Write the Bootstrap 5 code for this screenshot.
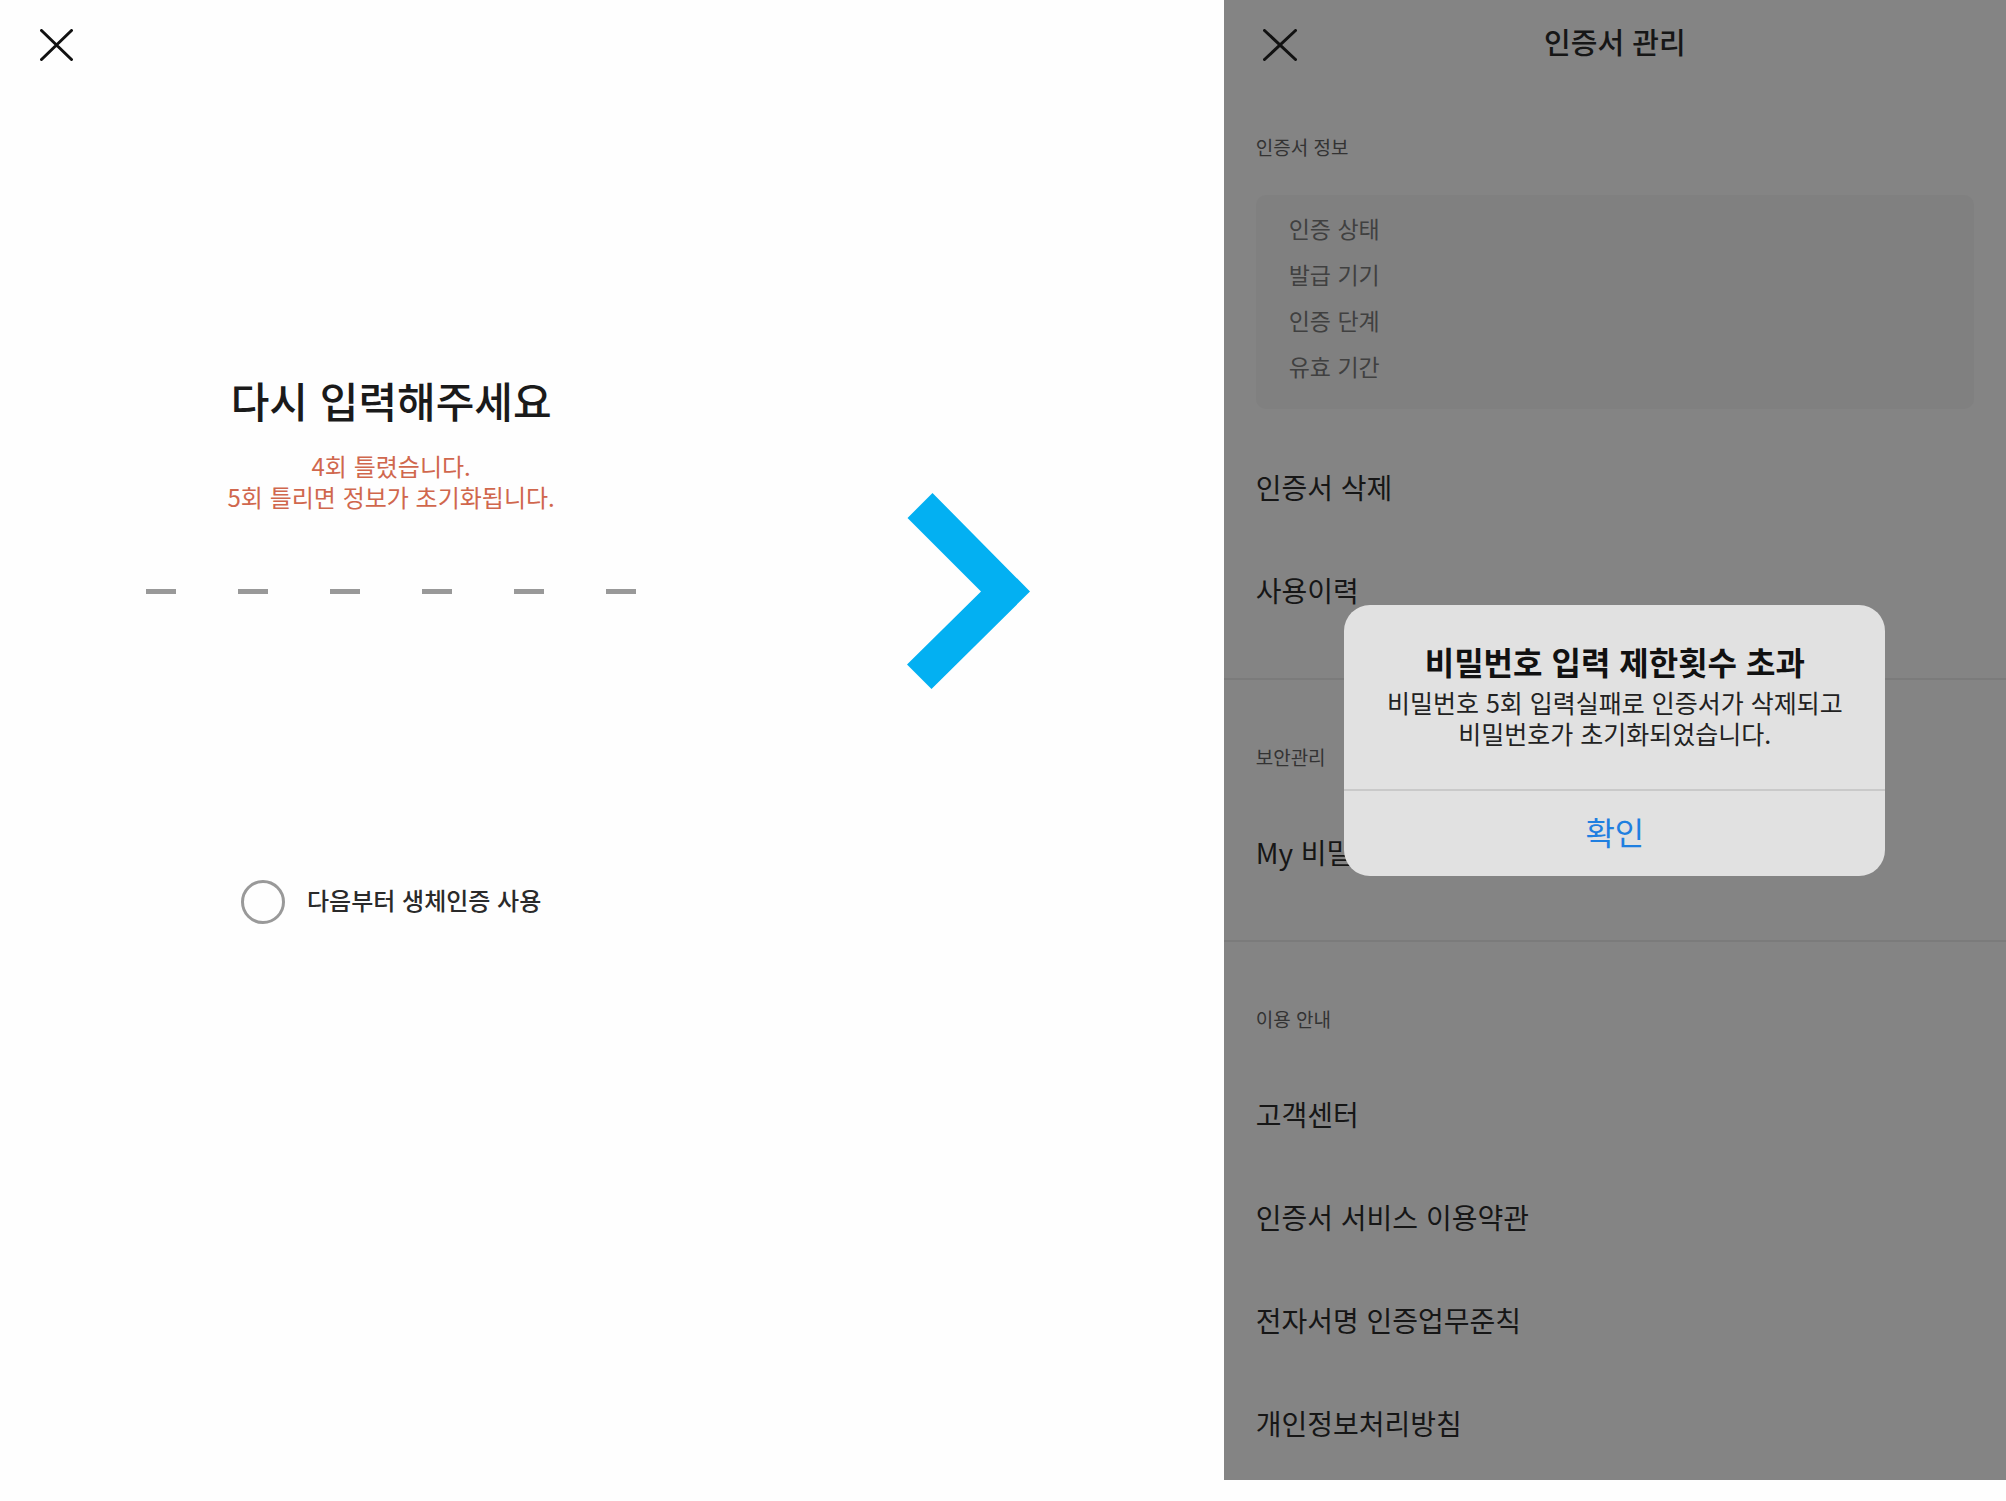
<!DOCTYPE html>
<html lang="ko">
<head>
<meta charset="utf-8">
<meta name="viewport" content="width=device-width, initial-scale=1">
<title>인증서 관리</title>
<link href="https://cdn.jsdelivr.net/npm/bootstrap@5.3.0/dist/css/bootstrap.min.css" rel="stylesheet">
<style>
  body { font-family: "Noto Sans CJK KR", sans-serif; color: #1a1a1a; background: #fefefe; }
  .phone { flex: 0 0 39%; min-width: 0; }
  .top-bar { height: 86px; }
  .close-btn { width: 34px; height: 32px; }
  .close-btn svg, .arrow svg { display: block; }

  .retry-title { font-size: 42px; line-height: 60px; font-weight: 500; margin: 284px 0 20px; }
  .retry-note { font-size: 24px; line-height: 31px; color: #d0674d; }
  .pins { gap: 62px; margin-top: 42px; }
  .pin { width: 30px; height: 40px; border: 0; border-bottom: 5px solid #999; background: none; outline: 0; text-align: center; }
  .bio { margin-top: 286px; gap: 22px; font-size: 24px; line-height: 40px; font-weight: 500; color: #2a2a2a; }
  .bio .form-check-input { width: 44px; height: 44px; margin: 0; border: 3px solid #999; background-color: transparent; }
  .bio label { padding-bottom: 4px; }

  .arrow { padding: 493px 0 0 6.2%; }

  .manage { background: #848484; }
  .manage .top-bar { padding-left: 39px; }
  .bar-title { font-size: 29px; line-height: 40px; padding-bottom: 4px; color: #161616; }
  .group { padding: 57px 32px 36px; border-bottom: 2px solid #7b7b7b; }
  .group:first-of-type { padding-top: 41px; }
  .group:last-of-type { border-bottom: 0; padding-bottom: 5px; }
  .group-name { font-size: 19px; line-height: 40px; color: #333; margin: 0 0 24px; }
  .info { background: #808080; border-radius: 10px; padding: 10px 33px 20px; margin: 28px 0 27px; font-size: 23px; line-height: 46px; color: #404040; }
  .info dt { font-weight: 400; }
  .entry { display: block; font-size: 28px; line-height: 103px; color: #161616; text-decoration: none; }

  .alert-box { width: 541px; max-width: 90%; background: #e1e1e1; border-radius: 26px; }
  .alert-text { padding: 36px 20px 40px; border-bottom: 2px solid #c9c9c9; }
  .alert-title { font-size: 32px; line-height: 40px; font-weight: 700; color: #111; margin: 0 0 6px; }
  .alert-note { font-size: 25px; line-height: 31px; color: #222; }
  .ok-btn { font-size: 32px; line-height: 80px; padding: 0 0 5px; color: #1f7fe0; }
</style>
<script src="https://cdn.jsdelivr.net/npm/bootstrap@5.3.0/dist/js/bootstrap.bundle.min.js"></script>
</head>
<body>
<div class="d-flex">
  <main class="phone d-flex flex-column align-items-center">
    <header class="top-bar w-100 d-flex align-items-center ps-4">
      <button type="button" class="close-btn btn p-0 border-0 ms-3 mt-1" aria-label="닫기">
        <svg width="34" height="32" viewBox="0 0 34 32" fill="none" stroke="#111" stroke-width="3" stroke-linecap="round"><path d="M1.500 1.500l30 29M31.500 1.500l-30 29"/></svg>
      </button>
    </header>
    <h1 class="retry-title">다시 입력해주세요</h1>
    <p class="retry-note text-center mb-0">4회 틀렸습니다.<br>5회 틀리면 정보가 초기화됩니다.</p>
    <div class="pins d-flex">
      <input class="pin p-0" type="password" maxlength="1" aria-label="비밀번호 1">
      <input class="pin p-0" type="password" maxlength="1" aria-label="비밀번호 2">
      <input class="pin p-0" type="password" maxlength="1" aria-label="비밀번호 3">
      <input class="pin p-0" type="password" maxlength="1" aria-label="비밀번호 4">
      <input class="pin p-0" type="password" maxlength="1" aria-label="비밀번호 5">
      <input class="pin p-0" type="password" maxlength="1" aria-label="비밀번호 6">
    </div>
    <div class="bio d-flex align-items-center">
      <input class="form-check-input rounded-circle" type="checkbox" id="bio">
      <label for="bio">다음부터 생체인증 사용</label>
    </div>
  </main>

  <div class="arrow flex-grow-1">
    <svg width="123" height="196" viewBox="0 0 123 196" aria-hidden="true"><path d="M25.500 0L123 98.500L24.500 196L0 171.500L74 98.500L0.500 25z" fill="#03b0f2"/></svg>
  </div>

  <div class="phone manage position-relative">
    <header class="top-bar position-relative d-flex align-items-center justify-content-center">
      <button type="button" class="close-btn btn p-0 border-0 mt-1 me-auto" aria-label="닫기">
        <svg width="34" height="32" viewBox="0 0 34 32" fill="none" stroke="#111" stroke-width="3" stroke-linecap="round"><path d="M1.500 1.500l31 29M32.500 1.500l-31 29"/></svg>
      </button>
      <h2 class="bar-title position-absolute start-0 w-100 text-center mb-0 pe-none">인증서 관리</h2>
    </header>
    <section class="group">
      <h3 class="group-name fw-normal">인증서 정보</h3>
      <dl class="info">
        <dt>인증 상태</dt>
        <dt>발급 기기</dt>
        <dt>인증 단계</dt>
        <dt>유효 기간</dt>
      </dl>
      <a class="entry" href="#">인증서 삭제</a>
      <a class="entry" href="#">사용이력</a>
    </section>
    <section class="group">
      <h3 class="group-name fw-normal">보안관리</h3>
      <a class="entry" href="#">My 비밀</a>
    </section>
    <section class="group">
      <h3 class="group-name fw-normal">이용 안내</h3>
      <a class="entry" href="#">고객센터</a>
      <a class="entry" href="#">인증서 서비스 이용약관</a>
      <a class="entry" href="#">전자서명 인증업무준칙</a>
      <a class="entry" href="#">개인정보처리방침</a>
    </section>

    <div class="position-absolute top-0 start-0 w-100 h-100 d-flex align-items-center justify-content-center">
      <div class="alert-box text-center" role="alertdialog" aria-labelledby="alert-title" aria-describedby="alert-note">
        <div class="alert-text">
          <h2 class="alert-title" id="alert-title">비밀번호 입력 제한횟수 초과</h2>
          <p class="alert-note mb-0" id="alert-note">비밀번호 5회 입력실패로 인증서가 삭제되고<br>비밀번호가 초기화되었습니다.</p>
        </div>
        <button type="button" class="ok-btn btn w-100 border-0">확인</button>
      </div>
    </div>
  </div>
</div>
</body>
</html>
